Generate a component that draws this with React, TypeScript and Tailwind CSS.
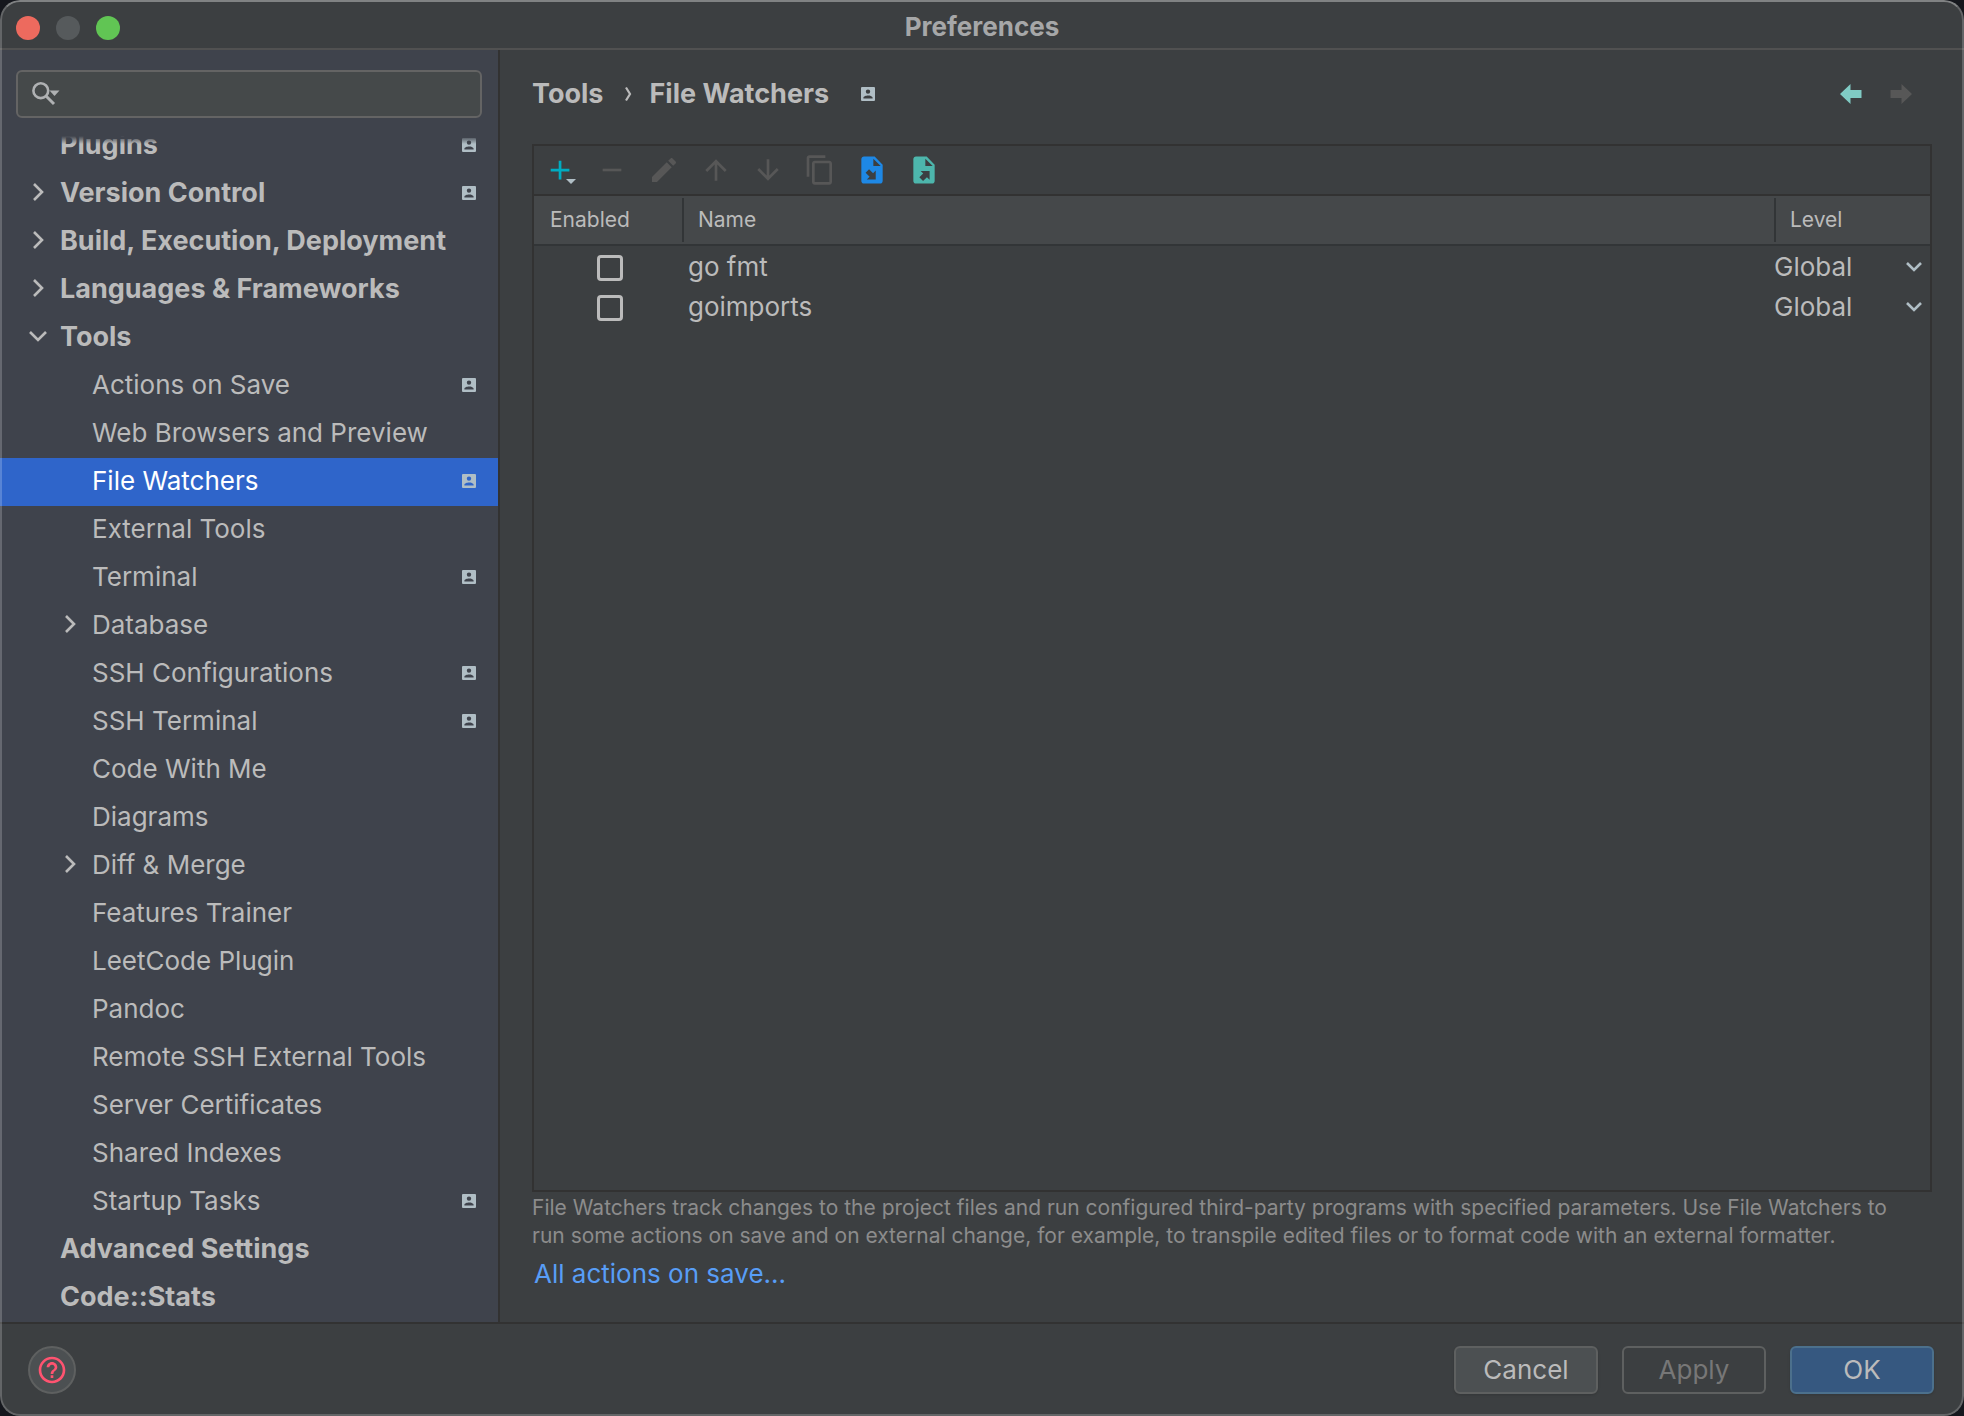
import React from 'react';
import clsx from 'clsx';

type TreeItem = {
  label: string;
  level: 0 | 1;
  arrow?: 'right' | 'down';
  badge?: boolean;
  selected?: boolean;
};

const treeItems: TreeItem[] = [
  { label: 'Version Control', level: 0, arrow: 'right', badge: true },
  { label: 'Build, Execution, Deployment', level: 0, arrow: 'right' },
  { label: 'Languages & Frameworks', level: 0, arrow: 'right' },
  { label: 'Tools', level: 0, arrow: 'down' },
  { label: 'Actions on Save', level: 1, badge: true },
  { label: 'Web Browsers and Preview', level: 1 },
  { label: 'File Watchers', level: 1, badge: true, selected: true },
  { label: 'External Tools', level: 1 },
  { label: 'Terminal', level: 1, badge: true },
  { label: 'Database', level: 1, arrow: 'right' },
  { label: 'SSH Configurations', level: 1, badge: true },
  { label: 'SSH Terminal', level: 1, badge: true },
  { label: 'Code With Me', level: 1 },
  { label: 'Diagrams', level: 1 },
  { label: 'Diff & Merge', level: 1, arrow: 'right' },
  { label: 'Features Trainer', level: 1 },
  { label: 'LeetCode Plugin', level: 1 },
  { label: 'Pandoc', level: 1 },
  { label: 'Remote SSH External Tools', level: 1 },
  { label: 'Server Certificates', level: 1 },
  { label: 'Shared Indexes', level: 1 },
  { label: 'Startup Tasks', level: 1, badge: true },
  { label: 'Advanced Settings', level: 0 },
  { label: 'Code::Stats', level: 0 },
];

const watchers = ['go fmt', 'goimports'];

const filePath =
  'M6 1.8c-1.1 0-2 .9-2 2v16.4c0 1.1.9 2 2 2h12c1.1 0 2-.9 2-2V8l-6-6.2H6zM13 9V3.5L18.5 9H13z';

const tools = [
  {
    label: 'Remove',
    color: 'text-[#575757]',
    path: 'M19 13H5v-2h14v2z',
  },
  {
    label: 'Edit',
    color: 'text-[#575757]',
    path: 'M3 17.25V21h3.75L17.81 9.94l-3.75-3.75L3 17.25zM20.71 7.04c.39-.39.39-1.02 0-1.41l-2.34-2.34c-.39-.39-1.02-.39-1.41 0l-1.83 1.83 3.75 3.75 1.83-1.83z',
  },
  {
    label: 'Move up',
    color: 'text-[#575757]',
    path: 'M4 12l1.41 1.41L11 7.83V20h2V7.83l5.58 5.59L20 12l-8-8-8 8z',
  },
  {
    label: 'Move down',
    color: 'text-[#575757]',
    path: 'M20 12l-1.41-1.41L13 16.17V4h-2v12.17l-5.58-5.59L4 12l8 8 8-8z',
  },
  {
    label: 'Copy',
    color: 'text-[#575757]',
    path: 'M16 1H4c-1.1 0-2 .9-2 2v14h2V3h12V1zm3 4H8c-1.1 0-2 .9-2 2v14c0 1.1.9 2 2 2h11c1.1 0 2-.9 2-2V7c0-1.1-.9-2-2-2zm0 16H8V7h11v14z',
  },
  {
    label: 'Import',
    color: 'text-[#1e88e5]',
    path: filePath + 'M14.8 12.4V19.1H8.1L10.2 17 7.2 14.1 9.8 11.4 12.8 14.4Z',
  },
  {
    label: 'Export',
    color: 'text-[#4db6ac]',
    path: filePath + 'M16.2 12.7V19.3L14.2 17.4 11.3 20.2 8.5 17.5 11.4 14.6 9.5 12.7Z',
  },
];

const Badge: React.FC = () => (
  <svg className="size-3.5 shrink-0 text-[#b0bec5]" viewBox="0 0 14 14" fill="currentColor" aria-hidden="true">
    <path
      fillRule="evenodd"
      d="M1 0h12a1 1 0 0 1 1 1v12a1 1 0 0 1-1 1H1a1 1 0 0 1-1-1V1a1 1 0 0 1 1-1zM7 2.4a2.2 2.2 0 1 0 0 4.4 2.2 2.2 0 0 0 0-4.4zM2.4 11.5h9.2v-.8C11.6 9.2 8.6 8.4 7 8.4s-4.6.8-4.6 2.3z"
    />
  </svg>
);

const Chevron: React.FC<{ dir: 'right' | 'down' }> = ({ dir }) => (
  <svg className="size-6 shrink-0" viewBox="0 0 24 24" fill="none" stroke="currentColor" strokeWidth="2.6" aria-hidden="true">
    <path d={dir === 'right' ? 'M8 3L16 11L8 19' : 'M4 7L12 15L20 7'} />
  </svg>
);

const TreeRow: React.FC<{ item: TreeItem }> = ({ item }) => (
  <li>
    <button
      className={clsx(
        'flex h-12 w-full items-center pr-5.5 pb-0.5 text-left',
        item.level === 0 ? 'pl-6.5 text-[27px] font-bold' : 'pl-14.5',
        item.selected && 'bg-[#2f65ca] text-white',
      )}
    >
      <span className="mr-2.5 flex size-6 shrink-0 items-center justify-center">
        {item.arrow && <Chevron dir={item.arrow} />}
      </span>
      <span className="flex-1 whitespace-nowrap">{item.label}</span>
      {item.badge && <Badge />}
    </button>
  </li>
);

const Sidebar: React.FC = () => (
  <aside className="flex w-[500px] shrink-0 flex-col border-r-2 border-[#323232] bg-[#3f434c]">
    <div className="mx-4 mt-5 flex h-12 items-center rounded-md border-2 border-[#646464] bg-[#45494a] pl-3.5">
      <svg className="h-6 w-7 shrink-0" viewBox="0 0 28 24" aria-hidden="true">
        <circle cx="8.8" cy="8.7" r="7.4" fill="none" stroke="#afb1b3" strokeWidth="2.6" />
        <path d="M14 14L22 22" stroke="#afb1b3" strokeWidth="3" />
        <path d="M17.5 8.5h10l-5 5.5z" fill="#afb1b3" />
      </svg>
      <input type="text" aria-label="Search settings" className="h-full min-w-0 flex-1 bg-transparent px-2 outline-none" />
    </div>
    <nav className="mt-4.5" aria-label="Settings">
      <ul>
        {/* first row is scrolled partly out of view */}
        <li className="relative flex h-8.5 items-end overflow-hidden">
          <button className="flex h-12 w-full shrink-0 items-center pr-5.5 pb-0.5 pl-15 text-left text-[27px] font-bold">
            <span className="flex-1">Plugins</span>
            <Badge />
          </button>
          <span className="absolute inset-x-0 top-0 h-2 bg-linear-to-b from-[#3f434c] to-transparent" />
        </li>
        {treeItems.map((item) => (
          <TreeRow key={item.label} item={item} />
        ))}
      </ul>
    </nav>
  </aside>
);

const Toolbar: React.FC = () => (
  <div className="flex h-12.5 items-center gap-5 border-b-2 border-[#323232] px-2.5">
    <button aria-label="Add">
      <svg className="size-8" viewBox="0 0 32 32" aria-hidden="true">
        <path d="M14.7 6.7h2.7v8h8v2.7h-8v8h-2.7v-8h-8v-2.7h8z" fill="#00acc1" />
        <path d="M22 25h10l-5 5z" fill="#b0bec5" />
      </svg>
    </button>
    {tools.map((tool) => (
      <button key={tool.label} aria-label={tool.label}>
        <svg className={clsx('size-8', tool.color)} viewBox="0 0 24 24" fill="currentColor" aria-hidden="true">
          <path fillRule="evenodd" d={tool.path} />
        </svg>
      </button>
    ))}
  </div>
);

const WatchersTable: React.FC = () => (
  <table className="w-full table-fixed border-separate border-spacing-0 text-left">
    <colgroup>
      <col className="w-[148px]" />
      <col />
      <col className="w-[156px]" />
    </colgroup>
    <thead className="bg-[#45484a] text-[21px]">
      <tr className="h-12.5">
        <th className="border-b-2 border-[#323537] p-0 pl-4 font-normal">Enabled</th>
        <th className="border-b-2 border-[#323537] p-0 font-normal">
          <div className="flex h-11 items-center border-l-2 border-[#323537] pl-3.5">Name</div>
        </th>
        <th className="border-b-2 border-[#323537] p-0 font-normal">
          <div className="flex h-11 items-center border-l-2 border-[#323537] pl-3.5">Level</div>
        </th>
      </tr>
    </thead>
    <tbody>
      {watchers.map((name) => (
        <tr key={name} className="h-10">
          <td className="p-0 pt-1 pl-1">
            <input
              type="checkbox"
              aria-label={`Enable ${name}`}
              className="mx-auto block size-6.5 appearance-none rounded-sm border-3 border-[#bbbbbb]"
            />
          </td>
          <td className="p-0 pt-0.5 pl-1.5">{name}</td>
          <td className="p-0 pt-0.5">
            <div className="flex items-center pr-1.5">
              <select aria-label={`Level of ${name}`} className="min-w-0 flex-1 appearance-none bg-transparent outline-none">
                <option>Global</option>
              </select>
              <svg className="size-5 text-[#b0bec5]" viewBox="0 0 20 20" fill="none" stroke="currentColor" strokeWidth="2.6" aria-hidden="true">
                <path d="M3 6L10 13L17 6" />
              </svg>
            </div>
          </td>
        </tr>
      ))}
    </tbody>
  </table>
);

const App: React.FC = () => {
  return (
    <div className="min-h-screen bg-[#15171d] font-['Inter','Liberation_Sans',sans-serif] text-[26px] leading-8 text-[#bbbbbb]">
      <div className="relative flex min-h-screen flex-col overflow-hidden rounded-[20px] bg-[#3c3f41]">
        <header className="relative flex h-12.5 items-center justify-center border-b-2 border-[#515151] pt-1.5">
          <div className="absolute top-4 left-4 flex gap-4">
            <button aria-label="Close" className="size-6 rounded-full bg-[#ed6a5e]" />
            <button aria-label="Minimize" className="size-6 rounded-full bg-[#565a5c]" />
            <button aria-label="Zoom" className="size-6 rounded-full bg-[#61c554]" />
          </div>
          <h1 className="font-bold text-[#a6a7a8]">Preferences</h1>
        </header>

        <div className="flex flex-1">
          <Sidebar />
          <main className="flex min-w-0 flex-1 flex-col px-8 pt-6.5 pb-8">
            <div className="flex h-9 items-center justify-between pr-5">
              <div className="flex items-center text-[27px] font-bold">
                <span>Tools</span>
                <svg className="mr-4 ml-5 h-4 w-2.5" viewBox="0 0 10 16" fill="none" stroke="currentColor" strokeWidth="2.2" aria-hidden="true">
                  <path d="M3 1.5L7 8L3 14.5" />
                </svg>
                <h2 className="mr-8">File Watchers</h2>
                <Badge />
              </div>
              <div className="flex gap-7">
                <button aria-label="Back">
                  <svg className="h-5 w-5.5" viewBox="0 0 22 20" fill="#80cbc4" aria-hidden="true">
                    <path d="M0 10L10.5 0V6H21.5V14H10.5V20Z" />
                  </svg>
                </button>
                <button aria-label="Forward" disabled>
                  <svg className="h-5 w-5.5" viewBox="0 0 22 20" fill="#575757" aria-hidden="true">
                    <path d="M22 10L11.5 0V6H.5V14H11.5V20Z" />
                  </svg>
                </button>
              </div>
            </div>

            <section className="mt-8 flex-1 border-2 border-[#323232]">
              <Toolbar />
              <WatchersTable />
            </section>

            <p className="mt-0.5 pr-5 text-[21px] leading-7 text-[#8c8c8c]">
              File Watchers track changes to the project files and run configured third-party programs with specified
              parameters. Use File Watchers to run some actions on save and on external change, for example, to
              transpile edited files or to format code with an external formatter.
            </p>
            <a href="#actions-on-save" className="mt-2 ml-0.5 self-start text-[#589df6]">
              All actions on save...
            </a>
          </main>
        </div>

        <footer className="flex h-23.5 shrink-0 items-center gap-6 border-t-2 border-[#323232] pr-7.5 pl-7">
          <button
            aria-label="Help"
            className="mr-auto flex size-12 items-center justify-center rounded-full border-2 border-[#5e6060] bg-[#4c5052]"
          >
            <svg className="size-8" viewBox="0 0 24 24" fill="#ff5370" aria-hidden="true">
              <path d="M11 18h2v-2h-2v2zm1-16C6.48 2 2 6.48 2 12s4.48 10 10 10 10-4.48 10-10S17.52 2 12 2zm0 18c-4.41 0-8-3.59-8-8s3.59-8 8-8 8 3.59 8 8-3.59 8-8 8zm0-14c-2.21 0-4 1.79-4 4h2c0-1.1.9-2 2-2s2 .9 2 2c0 2-3 1.75-3 5h2c0-2.25 3-2.5 3-5 0-2.21-1.79-4-4-4z" />
            </svg>
          </button>
          <button className="h-12 w-36 rounded-md border-2 border-[#5e6060] bg-[#4c5052] shadow-sm">Cancel</button>
          <button disabled className="h-12 w-36 rounded-md border-2 border-[#5e6060] text-[#777777]">
            Apply
          </button>
          <button className="h-12 w-36 rounded-md border-2 border-[#4c708c] bg-[#365880] shadow-sm">OK</button>
        </footer>

        {/* window outline, drawn over the panels */}
        <div className="pointer-events-none absolute inset-0 rounded-[20px] border-2 border-white/20 border-t-white/35" />
      </div>
    </div>
  );
};

export default App;
